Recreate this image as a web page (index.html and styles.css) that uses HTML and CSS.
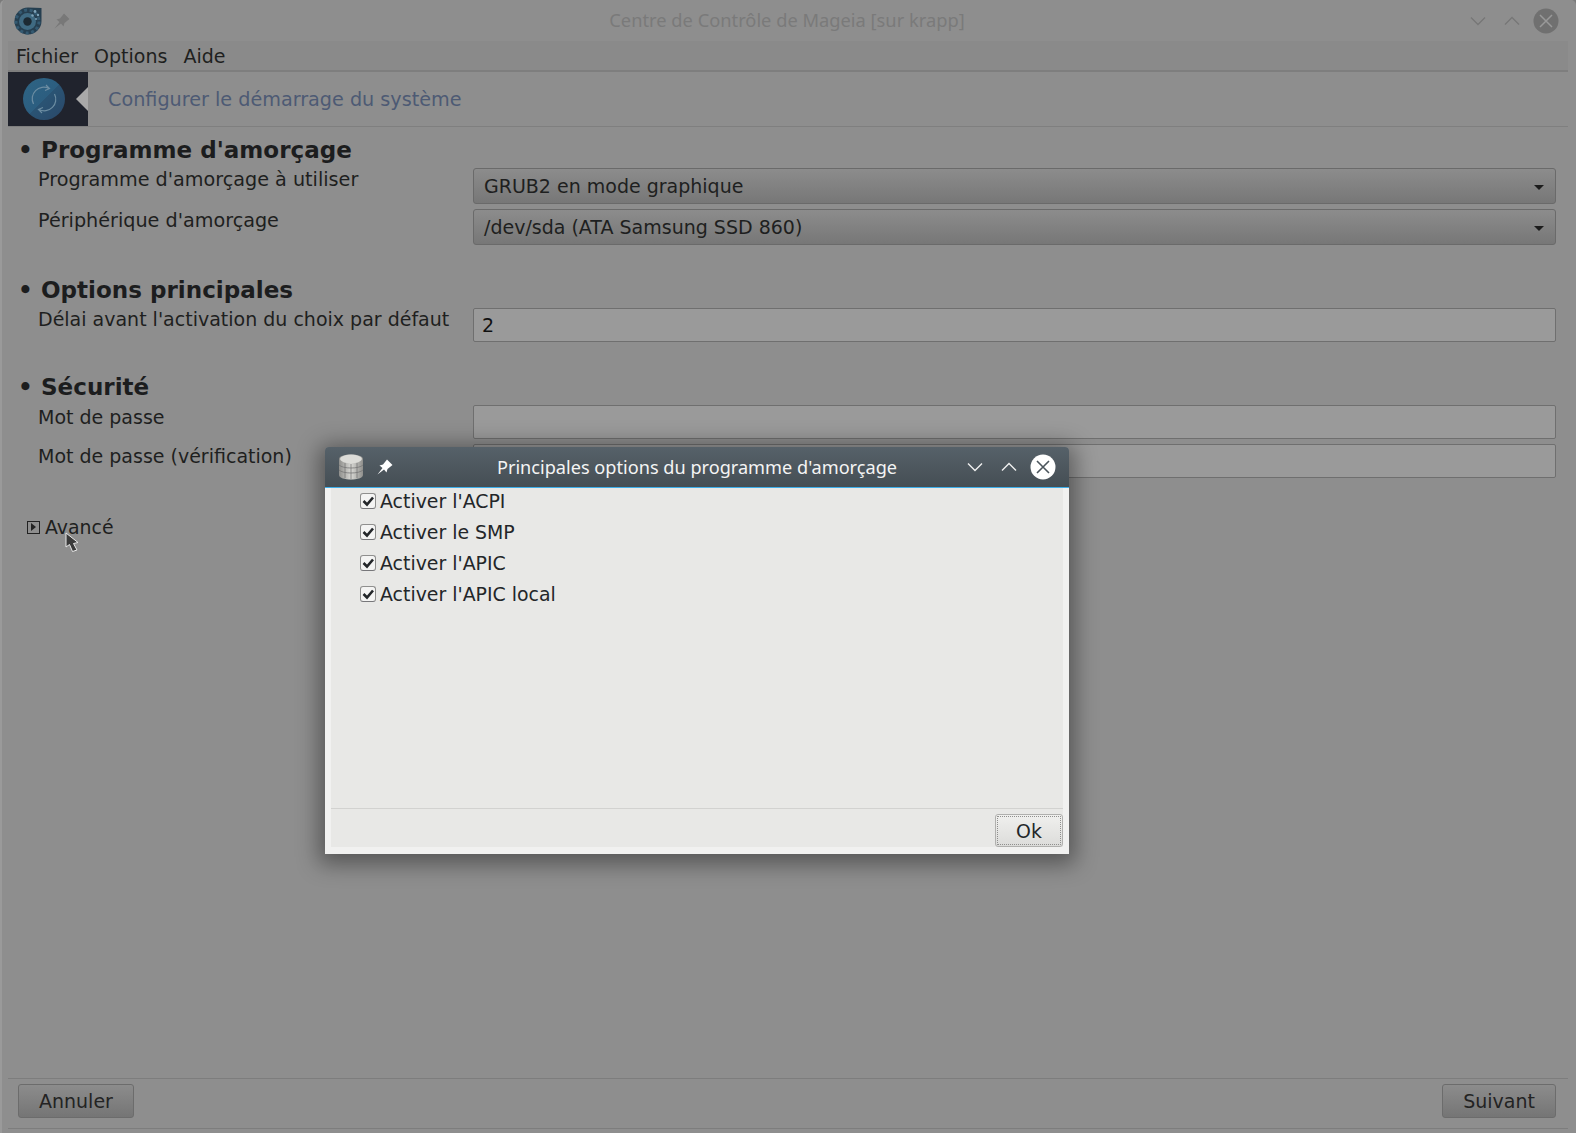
FILE: index.html
```html
<!DOCTYPE html>
<html lang="fr">
<head>
<meta charset="utf-8">
<title>Centre de Contrôle de Mageia</title>
<link rel="stylesheet" href="styles.css">
</head>
<body>
<div class="window">
  <header class="titlebar">
    <svg class="logo" viewBox="0 0 28 28" width="28" height="28">
      <path d="M27.5 1 V14 A13.5 13.5 0 1 1 14 0.5 Z" fill="#263f50"/>
      <circle cx="13.5" cy="14.5" r="11.5" fill="none" stroke="#345a72" stroke-width="3" stroke-dasharray="3 2.6"/>
      <circle cx="13.5" cy="14.5" r="8.5" fill="#3f6a82"/>
      <circle cx="13.5" cy="14.5" r="4.2" fill="#1c2a33"/>
      <circle cx="21" cy="4.5" r="1.4" fill="#7da2b8"/><circle cx="24" cy="8" r="1.2" fill="#7da2b8"/><circle cx="18.5" cy="8.5" r="1.2" fill="#7da2b8"/><circle cx="22" cy="12" r="1" fill="#7da2b8"/>
    </svg>
    <svg class="pin" viewBox="0 0 16 16" width="16" height="16">
      <path d="M0.5 15.5 L5.5 9 L2.5 6.5 L6 5.5 L10 0.5 L15.5 6 L10.5 10 L9.5 13.5 L7 10.5 Z" fill="#787878"/>
    </svg>
    <div class="window-title">Centre de Contrôle de Mageia [sur krapp]</div>
    <div class="controls">
      <svg viewBox="0 0 16 10" width="16" height="10"><path d="M1 1.5 L8 8.5 L15 1.5" fill="none" stroke="#777" stroke-width="1.4"/></svg>
      <svg viewBox="0 0 16 10" width="16" height="10"><path d="M1 8.5 L8 1.5 L15 8.5" fill="none" stroke="#777" stroke-width="1.4"/></svg>
      <svg class="close" viewBox="0 0 26 26" width="26" height="26"><circle cx="13" cy="13" r="12.5" fill="#707070"/><path d="M7 7 L19 19 M19 7 L7 19" stroke="#999" stroke-width="1.5"/></svg>
    </div>
  </header>
  <div class="client">
    <nav class="menubar"><span>Fichier</span><span>Options</span><span>Aide</span></nav>
    <div class="banner">
      <div class="banner-icon">
        <svg viewBox="0 0 42 42" width="42" height="42">
          <defs>
            <linearGradient id="ball" x1="0" y1="0" x2="1" y2="1"><stop offset="0" stop-color="#2e6484"/><stop offset=".5" stop-color="#2c5e80"/><stop offset=".5" stop-color="#2a5474"/><stop offset="1" stop-color="#2a4768"/></linearGradient>
          </defs>
          <circle cx="21" cy="21" r="21" fill="url(#ball)"/>
          <path d="M10.5 26 A11.5 11.5 0 0 1 26 10.5 M23 7 L26.5 10.5 L22 12.5" fill="none" stroke="#6c8da2" stroke-width="1.2"/>
          <path d="M31.5 16 A11.5 11.5 0 0 1 16 31.5 M19 35 L15.5 31.5 L20 29.5" fill="none" stroke="#6c8da2" stroke-width="1.2"/>
        </svg>
        <div class="notch"></div>
      </div>
      <div class="banner-title">Configurer le démarrage du système</div>
    </div>
    <main class="form">
      <section class="sec sec-boot">
        <h2><span class="dot">•</span>Programme d'amorçage</h2>
        <div class="row row-combo"><label>Programme d'amorçage à utiliser</label><div class="combo">GRUB2 en mode graphique<i class="arrow"></i></div></div>
        <div class="row row-combo"><label>Périphérique d'amorçage</label><div class="combo">/dev/sda (ATA Samsung SSD 860)<i class="arrow"></i></div></div>
      </section>
      <section class="sec sec-main">
        <h2><span class="dot">•</span>Options principales</h2>
        <div class="row"><label>Délai avant l'activation du choix par défaut</label><div class="entry">2</div></div>
      </section>
      <section class="sec sec-sec">
        <h2><span class="dot">•</span>Sécurité</h2>
        <div class="row row-pass"><label>Mot de passe</label><div class="entry"></div></div>
        <div class="row row-pass"><label>Mot de passe (vérification)</label><div class="entry"></div></div>
      </section>
      <div class="expander"><i class="exp-box"></i>Avancé</div>
    </main>
    <footer class="footer">
      <div class="btn btn-dim">Annuler</div>
      <div class="btn btn-dim">Suivant</div>
    </footer>
  </div>
</div>

<svg class="cursor" viewBox="0 0 14 21" width="14" height="21">
  <path d="M1 1 L1 15 L4.5 12.5 L7.5 19.5 L12 18 L8.5 11.5 L13 10.5 Z" fill="#3a3a3a" stroke="#e8e8e8" stroke-width="1"/>
</svg>

<div class="dialog">
  <div class="dlg-title">
    <svg class="dlg-db" viewBox="0 0 24 26" width="24" height="26">
      <defs><linearGradient id="db" x1="0" y1="0" x2="1" y2="0"><stop offset="0" stop-color="#8f8f8c"/><stop offset=".5" stop-color="#d8d8d4"/><stop offset="1" stop-color="#8f8f8c"/></linearGradient></defs>
      <path d="M0 5 C0 -1 24 -1 24 5 V21 C24 27 0 27 0 21 Z" fill="url(#db)"/>
      <ellipse cx="12" cy="5" rx="11" ry="4.2" fill="#dcdcd8"/>
      <path d="M0 11 C4 15 20 15 24 11 M0 16 C4 20 20 20 24 16 M6 9 V24 M12 10 V25 M18 9 V24" fill="none" stroke="#777" stroke-width=".8"/>
    </svg>
    <svg class="dlg-pin" viewBox="0 0 16 16" width="16" height="16">
      <path d="M0.5 15.5 L5.5 9 L2.5 6.5 L6 5.5 L10 0.5 L15.5 6 L10.5 10 L9.5 13.5 L7 10.5 Z" fill="#fff"/>
    </svg>
    <div class="dlg-name">Principales options du programme d'amorçage</div>
    <div class="dlg-controls">
      <svg viewBox="0 0 16 10" width="16" height="10"><path d="M1 1.5 L8 8.5 L15 1.5" fill="none" stroke="#f0f0f0" stroke-width="1.4"/></svg>
      <svg viewBox="0 0 16 10" width="16" height="10"><path d="M1 8.5 L8 1.5 L15 8.5" fill="none" stroke="#f0f0f0" stroke-width="1.4"/></svg>
      <svg class="close" viewBox="0 0 26 26" width="26" height="26"><circle cx="13" cy="13" r="12.5" fill="#fff"/><path d="M7 7 L19 19 M19 7 L7 19" stroke="#4b555c" stroke-width="1.6"/></svg>
    </div>
  </div>
  <div class="dlg-frame">
    <div class="dlg-body">
      <ul class="checks">
        <li><i class="check"><svg viewBox="0 0 16 16" width="16" height="16"><path d="M3.5 8 L7 11.5 L13 4.5" fill="none" stroke="#232629" stroke-width="2.6"/></svg></i>Activer l'ACPI</li>
        <li><i class="check"><svg viewBox="0 0 16 16" width="16" height="16"><path d="M3.5 8 L7 11.5 L13 4.5" fill="none" stroke="#232629" stroke-width="2.6"/></svg></i>Activer le SMP</li>
        <li><i class="check"><svg viewBox="0 0 16 16" width="16" height="16"><path d="M3.5 8 L7 11.5 L13 4.5" fill="none" stroke="#232629" stroke-width="2.6"/></svg></i>Activer l'APIC</li>
        <li><i class="check"><svg viewBox="0 0 16 16" width="16" height="16"><path d="M3.5 8 L7 11.5 L13 4.5" fill="none" stroke="#232629" stroke-width="2.6"/></svg></i>Activer l'APIC local</li>
      </ul>
      <div class="dlg-foot"><div class="btn btn-ok">Ok</div></div>
    </div>
  </div>
</div>
</body>
</html>
```
FILE: styles.css
```css
* { box-sizing: border-box; }
html, body { margin: 0; height: 100%; }
body {
  width: 1576px; height: 1133px; overflow: hidden; position: relative;
  background: #7a7a7a;
  font-family: "DejaVu Sans", sans-serif;
  font-size: 19px;
  color: #1e1f20;
}
.window {
  height: 1133px; display: flex; flex-direction: column;
  background: #8e8e8e;
  border-left: 2px solid #9a9a9a;
  border-top-left-radius: 5px; border-top-right-radius: 5px;
}
.titlebar { height: 41px; display: flex; align-items: center; padding: 0 17px 0 12px; position: relative; flex: none; }
.logo { flex: none; }
.pin { margin-left: 12px; flex: none; }
.window-title {
  position: absolute; left: 0; right: 4px; top: 7px; text-align: center;
  font-family: "Noto Sans", sans-serif; font-size: 18.3px; color: #7a7a7a;
}
.controls { margin-left: auto; display: flex; align-items: center; gap: 18px; position: relative; }
.close { margin-left: -5px; }
.client { flex: 1; display: flex; flex-direction: column; margin: 0 8px 4px 6px; border-bottom: 1px solid #7d7d7d; min-height: 0; }
.menubar { display: flex; gap: 16px; align-items: center; padding: 0 8px; background: #8a8a8a; border-bottom: 2px solid #7e7e7e; height: 31px; flex: none; }
.banner { height: 55px; display: flex; align-items: center; border-bottom: 1px solid #7f7f7f; flex: none; }
.banner-icon { width: 80px; height: 54px; background: #20232d; position: relative; display: flex; align-items: center; padding-left: 15px; flex: none; }
.notch { position: absolute; right: 0; top: 15px; border: 12px solid transparent; border-right-color: #a9a9a9; border-left-width: 0; }
.banner-title { margin-left: 20px; color: #4d5a74; font-size: 19.2px; }
.form { flex: 1; padding: 7px 12px 0 14px; }
.sec h2 { margin: 0; font-size: 23.05px; line-height: 34px; font-weight: bold; display: flex; color: #1c1d1e; }
.dot { width: 23px; margin-left: -4px; flex: none; }
.row { display: grid; grid-template-columns: 435px 1fr; margin-left: 16px; }
.row label { line-height: 24px; }
.row-combo { height: 41px; }
.row-combo label { font-size: 19.2px; }
.combo {
  height: 36px; border: 1px solid #6a6a6a; border-radius: 3px; padding: 0 10px;
  display: flex; align-items: center; position: relative;
  background: linear-gradient(#8c8c8c, #777);
}
.arrow { position: absolute; right: 11px; top: 16px; border: 5px solid transparent; border-top: 5px solid #1c1c1c; border-bottom: 0; }
.entry {
  height: 34px; border: 1px solid #6f6f6f; border-radius: 2px; padding: 0 8px;
  display: flex; align-items: center; background: #9a9a9a; color: #111;
}
.sec-boot h2, .sec-sec h2 { line-height: 32px; margin-bottom: 2px; }
.sec-main { margin-top: 23px; }
.sec-main h2 { margin-bottom: 1px; }
.sec-main label { margin-top: -1px; }
.sec-sec { margin-top: 29px; }
.row-pass { height: 39px; }
.expander { margin-top: 31px; margin-left: 5px; display: flex; align-items: center; height: 26px; font-size: 18.9px; }
.exp-box { width: 13px; height: 13px; border: 1.5px solid #222; margin-right: 5px; position: relative; flex: none; }
.exp-box::after { content: ""; position: absolute; left: 3px; top: 1.5px; border: 4px solid transparent; border-left: 5px solid #222; border-right: 0; }
.footer { height: 50px; border-top: 1px solid #7d7d7d; display: flex; justify-content: space-between; padding: 5px 12px 11px 10px; flex: none; }
.btn { display: flex; align-items: center; justify-content: center; height: 34px; border-radius: 3px; }
.btn-dim { padding: 0 20px; border: 1px solid #6c6c6c; background: linear-gradient(#8c8c8c, #757575); color: #232323; }
.cursor { position: absolute; left: 65px; top: 532px; }
.dialog {
  position: absolute; left: 325px; top: 447px; width: 744px; height: 407px;
  display: flex; flex-direction: column;
  border-radius: 4px 4px 0 0;
  box-shadow: 0 4px 22px 6px rgba(0,0,0,.4);
}
.dlg-title {
  height: 40px; display: flex; align-items: center; padding: 0 13px 0 14px; position: relative;
  background: linear-gradient(#566169, #454e54);
  border-radius: 4px 4px 0 0; flex: none; color: #f4f4f4;
}
.dlg-pin { margin-left: 14px; flex: none; }
.dlg-name { position: absolute; left: 0; right: 0; text-align: center; font-family: "Noto Sans", sans-serif; font-size: 18.15px; }
.dlg-controls { margin-left: auto; display: flex; align-items: center; gap: 18px; position: relative; }
.dlg-frame { flex: 1; border-top: 1px solid #3daee9; background: #f1f1f0; padding: 0 6px 7px 6px; display: flex; min-height: 0; }
.dlg-body { flex: 1; background: #e8e8e6; display: flex; flex-direction: column; color: #232629; font-size: 18.9px; }
.checks { list-style: none; margin: -3px 0 0; padding: 0 0 0 29px; flex: 1; }
.checks li { height: 31px; display: flex; align-items: center; }
.check { width: 16px; height: 16px; border: 1px solid #8f8f8e; border-bottom-color: #77777a; border-radius: 3px; background: #f4f4f3; margin-right: 4px; display: block; flex: none; }
.check svg { display: block; margin: -1px; }
.dlg-foot { height: 39px; border-top: 1px solid #d2d2d0; display: flex; justify-content: flex-end; padding: 5px 0 0 0; flex: none; }
.btn-ok { width: 68px; height: 33px; border: 1px solid #b0b0ae; outline: 1px dotted #8f8f8d; outline-offset: -3px; background: linear-gradient(#f0f0ee, #dcdcda); }
```
